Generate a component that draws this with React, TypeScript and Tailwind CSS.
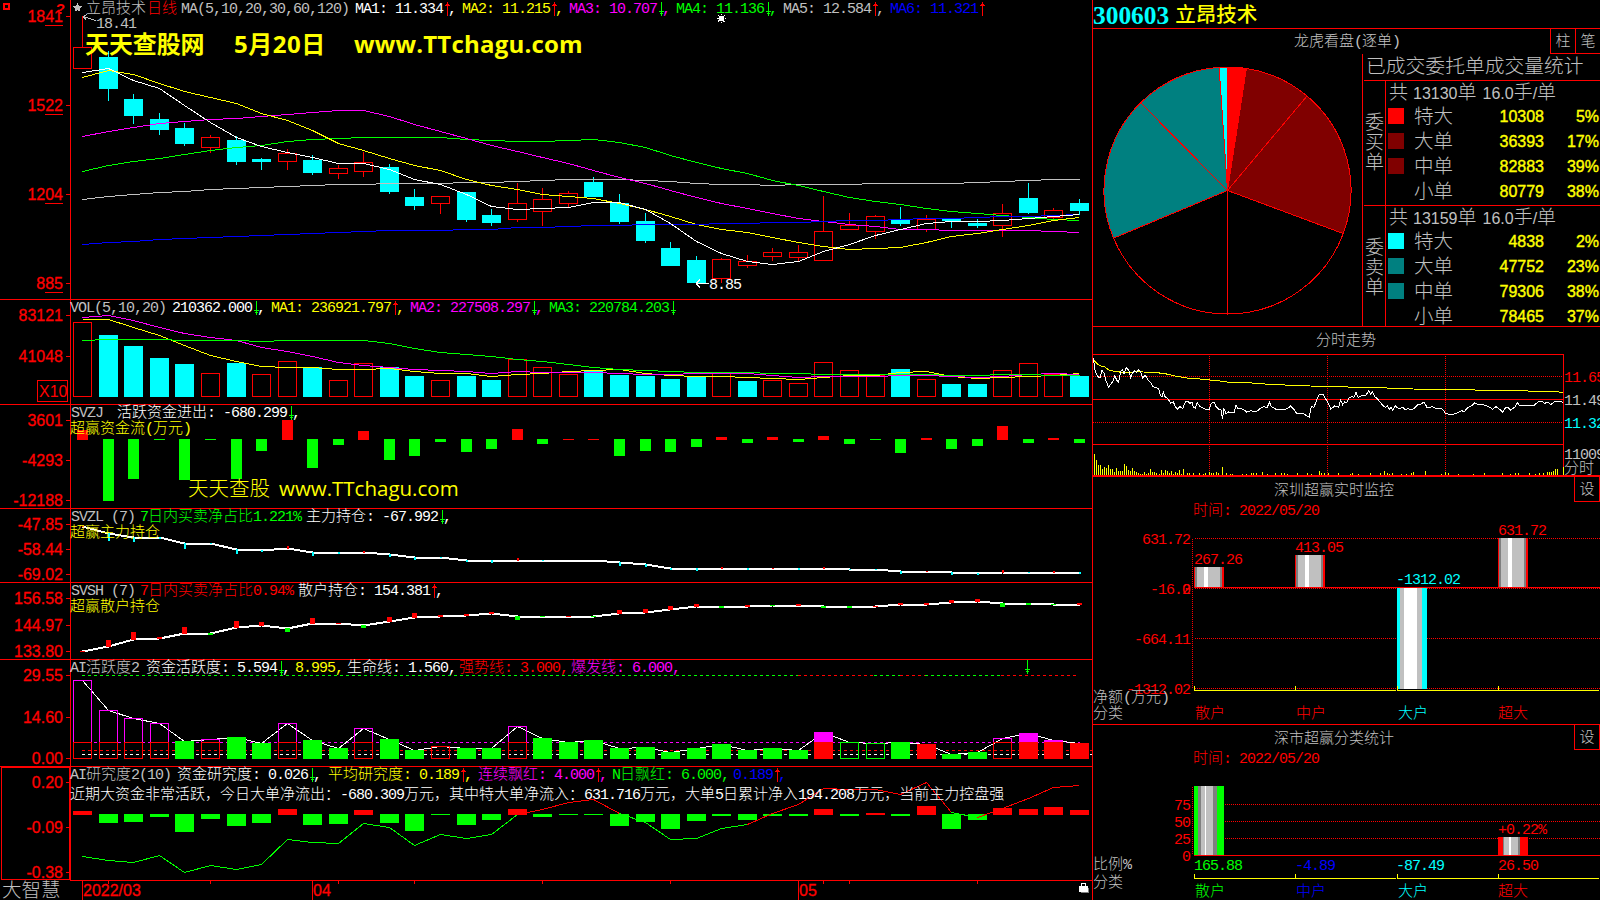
import type { ReactNode } from "react";

const RED = "#ff0000";
const CYAN = "#00ffff";
const GREEN = "#00ff00";
const YELLOW = "#ffff00";
const MAGENTA = "#ff00ff";
const BLUE = "#0000ff";
const WHITE = "#ffffff";
const SILVER = "#c0c0c0";
const GRAY = "#808080";

const MONO = '"Liberation Mono", "Noto Sans CJK SC", monospace';
const SANS = '"Liberation Sans", "Noto Sans CJK SC", sans-serif';

const CJK = /([\u2e80-\u9fff\uff00-\uffef]+)/;

// center of the n-th trading day column
const cx = (i: number) => Math.floor(82.7 + 25.56 * i) + 0.5;

// [up, body top, body bottom, high, low]
const candles: number[][] = [
  [1, 47, 68, 16, 68], [0, 57, 89, 51, 101], [0, 99, 116, 94, 124], [0, 119, 130, 113, 135],
  [0, 128, 144, 123, 146], [1, 137, 147, 135, 152], [0, 140, 162, 136, 165], [0, 159, 162, 158, 170],
  [1, 153, 161, 149, 169], [0, 160, 173, 155, 175], [1, 168, 173, 165, 178], [1, 162, 171, 152, 176],
  [0, 167, 192, 164, 194], [0, 197, 206, 189, 210], [1, 196, 203, 196, 213], [0, 192, 220, 192, 222],
  [0, 215, 223, 209, 226], [1, 203, 219, 183, 221], [1, 199, 211, 188, 225], [1, 193, 203, 191, 207],
  [0, 182, 197, 177, 197], [0, 203, 222, 194, 224], [0, 221, 241, 213, 243], [0, 248, 266, 242, 266],
  [0, 260, 283, 256, 283], [1, 259, 278, 258, 282], [1, 261, 265, 255, 267], [1, 252, 256, 248, 260],
  [1, 252, 257, 245, 261], [1, 231, 260, 196, 260], [1, 225, 229, 213, 229], [1, 216, 231, 215, 238],
  [0, 219, 224, 207, 226], [1, 219, 229, 215, 231], [0, 219, 221, 219, 228], [0, 223, 226, 219, 228],
  [1, 213, 225, 204, 236], [0, 198, 213, 183, 214], [1, 210, 217, 208, 219], [0, 203, 211, 199, 215],
];

const maLines: { color: string; ys: number[] }[] = [
  { color: SILVER, ys: [199, 196, 194, 192, 191, 189, 188, 187, 186, 185, 184, 184, 183, 183, 183, 182, 182, 181, 180, 179, 179, 179, 180, 181, 183, 184, 184, 185, 184, 184, 184, 183, 183, 183, 183, 182, 181, 180, 179, 179] },
  { color: GREEN, ys: [171, 165, 161, 158, 154, 150, 147, 145, 141, 139, 138, 137, 137, 137, 137, 139, 140, 141, 141, 140, 139, 142, 147, 155, 162, 168, 173, 180, 185, 191, 197, 201, 204, 208, 211, 213, 215, 217, 219, 220] },
  { color: MAGENTA, ys: [136, 131, 127, 123, 121, 119, 118, 116, 114, 112, 110, 110, 116, 124, 131, 138, 145, 151, 157, 163, 170, 177, 183, 190, 197, 203, 208, 213, 218, 221, 224, 226, 229, 229, 230, 230, 230, 230, 231, 232] },
  { color: YELLOW, ys: [77, 70, 74, 83, 91, 97, 103, 113, 120, 130, 143, 150, 158, 165, 170, 179, 185, 189, 194, 196, 198, 203, 209, 216, 224, 229, 232, 237, 242, 246, 249, 248, 247, 242, 236, 233, 229, 225, 220, 217] },
  { color: BLUE, ys: [244, 242, 241, 239, 238, 237, 236, 235, 234, 233, 232, 231, 230, 230, 230, 229, 229, 227, 227, 226, 225, 225, 224, 224, 224, 223, 223, 222, 222, 221, 220, 220, 219, 218, 218, 217, 216, 216, 215, 214] },
  { color: WHITE, ys: [72, 68, 80, 88, 105, 122, 137, 146, 152, 157, 163, 163, 169, 179, 184, 194, 206, 209, 208, 207, 202, 202, 209, 223, 241, 253, 261, 264, 261, 251, 244, 235, 229, 223, 221, 221, 220, 218, 216, 214] },
];

const volumeTops = [322, 335, 346, 358, 364, 373, 363, 374, 361, 367, 380, 363, 367, 376, 380, 376, 380, 359, 367, 374, 371, 375, 376, 379, 377, 373, 381, 380, 383, 362, 370, 375, 369, 379, 384, 384, 370, 363, 374, 376];
const volumeHollow = [0, 5, 7, 8, 10, 11, 14, 17, 18, 19, 25, 27, 28, 29, 30, 31, 33, 36, 37, 38];

const volLines: { color: string; ys: number[] }[] = [
  { color: YELLOW, ys: [319, 319, 327, 335, 345, 355, 361, 366, 367, 367, 369, 369, 368, 371, 373, 373, 376, 374, 373, 371, 370, 369, 373, 375, 376, 376, 377, 378, 379, 377, 375, 375, 372, 371, 376, 378, 377, 376, 375, 373] },
  { color: MAGENTA, ys: [317, 315, 320, 327, 333, 337, 340, 347, 351, 356, 362, 365, 367, 369, 370, 371, 373, 371, 372, 372, 372, 373, 374, 374, 373, 373, 373, 375, 377, 376, 376, 376, 375, 375, 376, 377, 376, 374, 373, 374] },
  { color: GREEN, ys: [340, 339, 339, 339, 340, 340, 340, 341, 340, 340, 340, 340, 343, 348, 352, 354, 356, 359, 361, 364, 367, 369, 370, 371, 372, 372, 372, 373, 373, 374, 374, 374, 374, 374, 375, 375, 374, 374, 375, 375] },
];

const fundFlow = [10, -62, -40, -1, -41, -1, -40, -12, 20, -29, -6, 9, -21, -17, -3, -13, -10, 11, -5, 1, 1, -17, -12, -13, -8, 3, -4, 3, -3, 4, -5, -1, -14, 2, -10, -7, 14, -4, 2, -4];

const mainHold = [526, 533, 537, 537, 543, 543, 549, 550, 548, 552, 552, 552, 554, 557, 557, 560, 560, 560, 560, 560, 560, 562, 564, 568, 568, 568, 568, 568, 568, 568, 569, 569, 571, 571, 572, 573, 572, 572, 572, 572];
const mainMarks = [1, -8, -5, -2, -6, -1, -5, -2, 3, -4, -2, 2, -3, -3, -1, -2, -3, 3, -1, 0, 0, -4, -3, -2, -3, 2, -2, 1, -2, 2, -1, -1, -3, 1, -3, -2, 3, -1, 2, -2];

const retailHold = [651, 646, 639, 638, 633, 633, 627, 625, 628, 623, 623, 625, 621, 617, 616, 615, 613, 616, 616, 616, 616, 613, 612, 609, 606, 606, 606, 605, 605, 606, 606, 606, 604, 604, 602, 601, 603, 603, 604, 604];
const retailMarks = [1, 7, 8, 2, 7, -2, 7, 4, -4, 6, 1, -3, 5, 5, 2, 2, 2, -4, -1, 1, -1, 4, 4, 4, 3, -2, 2, -1, 2, -2, -2, 1, 2, 2, 3, 3, -4, -2, -1, 2];

const activeTops = [680, 710, 718, 723, 741, 739, 737, 743, 723, 740, 748, 728, 739, 750, 746, 748, 748, 726, 738, 742, 740, 748, 747, 752, 748, 744, 750, 748, 750, 732, 742, 743, 742, 744, 754, 752, 738, 733, 740, 743];
// g = solid green, o = hollow red with magenta top, h = hollow green, r = hollow red, s = solid red, m = solid red with magenta top
const activeKinds = "oooogoggoggoggrggoggggggggggg" + "mhhgsggomms";

const research = [4, -9, -8, -3, -18, -5, -12, -9, 6, -11, -10, 5, -9, -17, -1, -11, -6, 6, -3, -1, -1, -12, -8, -15, -7, -2, -6, -2, -2, 6, -2, 2, -2, 9, -15, -6, 7, 6, 8, 5];
const researchLine = [856, 860, 862, 855, 872, 865, 869, 864, 839, 842, 843, 823, 827, 845, 834, 838, 834, 814, 809, 802, 799, 813, 822, 839, 838, 828, 824, 813, 804, 788, 789, 789, 794, 782, 812, 817, 808, 798, 787, 785];
const researchParts: [number, number, string][] = [
  [0, 17, GREEN], [17, 21, RED], [21, 26, GREEN], [26, 34, RED], [34, 35, GREEN], [35, 39, RED],
];

const minutePrice =
  "40,115 44,145 48,160 54,170 60,174 66,150 72,160 78,182 86,202 94,190 98,185 104,167 110,180 116,186 122,155 128,148 132,163 138,143 146,150 152,174 158,158 164,152 170,158 176,148 182,156 188,174 196,166 204,180 212,188 218,199 226,203 236,205 240,222 246,232 250,216 256,232 264,236 272,250 280,246 286,260 292,268 300,260 308,266 316,246 324,245 330,250 336,246 340,262 346,264 352,248 360,260 370,264 380,270 388,268 394,250 402,246 408,260 416,268 424,270 427,298 432,266 438,282 446,276 462,278 468,256 474,265 490,268 500,276 512,272 528,276 540,266 550,260 562,262 568,246 574,260 588,268 606,270 622,266 632,258 642,268 650,280 668,280 678,286 688,291 694,260 702,262 710,240 718,222 730,224 740,242 748,256 752,268 764,258 776,262 782,240 788,254 794,246 800,248 806,235 814,230 822,232 828,216 834,232 846,226 858,226 866,212 872,222 878,216 884,230 892,236 900,246 908,256 916,262 922,258 928,268 934,262 938,270 946,258 956,266 968,262 976,270 984,266 996,270 1004,264 1014,254 1024,252 1032,246 1042,264 1056,260 1068,266 1080,264 1090,270 1096,280 1112,284 1130,280 1146,272 1152,276 1164,262 1176,256 1184,248 1196,254 1210,254 1226,260 1238,268 1248,260 1262,270 1268,276 1276,264 1284,262 1292,270 1304,262 1312,248 1320,258 1340,256 1360,258 1374,246 1386,244 1394,250 1404,246 1412,254 1422,246 1436,244 1450,247";
const minuteAvg =
  "40,118 50,130 60,137 75,141 88,151 105,154 125,157 150,157 170,155 190,156 230,158 255,161 290,169 320,174 360,177 390,180 430,184 440,186 515,189 555,192 615,195 690,198 765,200 920,204 1000,207 1120,209 1305,212 1425,215 1450,217";
const minuteVol: [number, number][] = [
  [43, 402], [49, 420], [55, 435], [61, 435], [67, 447], [73, 441], [79, 444], [85, 435], [91, 447], [97, 447], [103, 456], [109, 444], [115, 453], [121, 453], [127, 453], [133, 432], [139, 438], [145, 450], [151, 453], [157, 444], [163, 453], [169, 456], [175, 459], [181, 462], [187, 462], [193, 456], [199, 462], [205, 459], [211, 447], [217, 456], [223, 456], [229, 459], [237, 462], [244, 450], [250, 459], [256, 450], [262, 453], [268, 459], [274, 453], [280, 462], [286, 456], [292, 459], [298, 450], [304, 462], [310, 447], [322, 459], [328, 460], [340, 459], [358, 460], [370, 462], [376, 459], [388, 456], [394, 460], [400, 460], [408, 456], [414, 460], [427, 441], [438, 460], [450, 461], [457, 461], [487, 461], [500, 461], [515, 459], [521, 459], [530, 459], [546, 456], [562, 461], [585, 459], [603, 459], [612, 460], [621, 461], [652, 459], [682, 459], [694, 461], [718, 453], [724, 459], [732, 459], [745, 459], [775, 460], [812, 461], [818, 459], [836, 461], [870, 459], [900, 459], [912, 453], [921, 459], [927, 461], [936, 459], [965, 461], [980, 461], [994, 459], [1000, 456], [1036, 453], [1084, 461], [1096, 456], [1104, 460], [1135, 461], [1180, 461], [1212, 459], [1268, 459], [1290, 461], [1306, 459], [1315, 459], [1348, 459], [1366, 461], [1378, 459], [1390, 459], [1402, 456], [1408, 456], [1414, 456], [1420, 453], [1426, 447], [1432, 447], [1450, 441],
];

type Item = { x: number; text: string; color: string; dir?: "up" | "down"; comma?: boolean };

const points = (ys: number[], from = 0, to = ys.length - 1) =>
  ys.slice(from, to + 1).map((y, i) => `${cx(i + from)},${y + 0.5}`).join(" ");

// Splits mixed strings so that Latin text gets an 8px pitch and CJK a 15px pitch
function Mixed({ text }: { text: string }) {
  return (
    <>
      {text.split(CJK).filter(Boolean).map((run, i) =>
        CJK.test(run) ? <span key={i}>{run}</span> : <span key={i} className="tracking-[-1px]">{run}</span>
      )}
    </>
  );
}

// Same as Mixed, for svg; y is the vertical middle of the glyphs
function Label({ x, y, color, children, anchor = "start" }: { x: number; y: number; color: string; children: string; anchor?: "start" | "end" | "middle" }) {
  return (
    <text x={x} y={y + 5} fill={color} fontFamily={MONO} fontSize={15} textAnchor={anchor} className="whitespace-pre">
      {children.split(CJK).filter(Boolean).map((run, i) => (
        <tspan key={i} letterSpacing={CJK.test(run) ? 0 : -1}>{run}</tspan>
      ))}
    </text>
  );
}

function Arrow({ dir }: { dir: "up" | "down" }) {
  return (
    <svg width="8" height="16" viewBox="0 0 8 16" className="mb-[3px] shrink-0" shapeRendering="crispEdges">
      {dir === "up" ? (
        <path d="M4.5 1v14M2 4.5h5M3 3.5h3" stroke={RED} fill="none" />
      ) : (
        <path d="M4.5 1v14M2 10.5h5M3 12.5h3" stroke={GREEN} fill="none" />
      )}
    </svg>
  );
}

function Legend({ items }: { items: Item[] }) {
  return (
    <div className="absolute top-px left-0 flex h-[18px] items-center whitespace-pre text-[15px] leading-[18px]" style={{ paddingLeft: items[0].x }}>
      {items.map((it, i) => (
        <div
          key={i}
          className="flex shrink-0 items-center"
          style={{ color: it.color, width: i < items.length - 1 ? items[i + 1].x - it.x : undefined }}
        >
          <span><Mixed text={it.text} /></span>
          {it.dir && <Arrow dir={it.dir} />}
          {it.comma && <span className="-ml-[3px]">,</span>}
        </div>
      ))}
    </div>
  );
}

function AxisLabels({ rows, underline }: { rows: [number, string][]; underline?: boolean }) {
  return (
    <g>
      {rows.map(([y, text]) => (
        <g key={text}>
          <text x={63} y={y + 6} textAnchor="end" fill={RED} stroke={RED} strokeWidth={0.3} fontFamily={SANS} fontSize={16}>
            {text}
          </text>
          <path d={`M66 ${y + 0.5}h4`} stroke={RED} shapeRendering="crispEdges" />
          {underline && <path d={`M45 ${y + 9.5}h18`} stroke={RED} shapeRendering="crispEdges" />}
        </g>
      ))}
    </g>
  );
}

function Panel({ top, height, rows, legend, sub, underline, children }: {
  top: number;
  height: number;
  rows: [number, string][];
  legend: Item[];
  sub?: string;
  underline?: boolean;
  children: ReactNode;
}) {
  return (
    <section className="relative shrink-0" style={{ height }}>
      <svg width="1092" height={height} viewBox={`0 ${top} 1092 ${height}`} className="block">
        <AxisLabels rows={rows} underline={underline} />
        <g shapeRendering="crispEdges" fill="none">
          <path d={`M70.5 ${top}v${height}`} stroke={RED} />
          {top > 0 && <path d={`M0 ${top + 0.5}h1092`} stroke={RED} />}
          {children}
        </g>
      </svg>
      <Legend items={legend} />
      {sub && (
        <div className="absolute top-[17px] left-[70px] whitespace-pre text-[15px] leading-[18px] text-[#ffff00]">
          <Mixed text={sub} />
        </div>
      )}
    </section>
  );
}

function PricePanel() {
  return (
    <Panel
      top={0}
      height={299}
      underline
      rows={[[16, "1841"], [105, "1522"], [194, "1204"], [283, "885"]]}
      legend={[
        { x: 86, text: "立昂技术", color: SILVER },
        { x: 147, text: "日线", color: RED },
        { x: 181, text: "MA(5,10,20,30,60,120)", color: SILVER },
        { x: 355, text: "MA1: 11.334", color: WHITE, dir: "up", comma: true },
        { x: 462, text: "MA2: 11.215", color: YELLOW, dir: "up", comma: true },
        { x: 569, text: "MA3: 10.707", color: MAGENTA, dir: "down", comma: true },
        { x: 676, text: "MA4: 11.136", color: GREEN, dir: "down", comma: true },
        { x: 783, text: "MA5: 12.584", color: SILVER, dir: "up", comma: true },
        { x: 890, text: "MA6: 11.321", color: BLUE, dir: "up" },
      ]}
    >
      <path d="M3.5 3.5h5v5h-5zM7 9h3" stroke={RED} strokeWidth={2} />
      <path d="M77.5 3l1.4 3.4h3.6l-2.9 2.2 1.1 3.7-3.2-2.2-3.2 2.2 1.1-3.7-2.9-2.2h3.6z" fill={SILVER} />
      <text x={56} y={14} fill={RED} fontFamily={SANS} fontSize={15} fontWeight={700}>?</text>
      {candles.map(([up, t, b, hi, lo], i) =>
        up ? (
          <g key={i} stroke={RED}>
            <rect x={cx(i) - 9} y={t + 0.5} width={18} height={b - t} />
            <path d={`M${cx(i)} ${hi}V${t}M${cx(i)} ${b}V${lo + 1}`} />
          </g>
        ) : (
          <g key={i}>
            <rect x={cx(i) - 9.5} y={t} width={19} height={b - t} fill={CYAN} />
            <path d={`M${cx(i)} ${hi}V${lo}`} stroke={CYAN} />
          </g>
        )
      )}
      {maLines.map((l) => (
        <polyline key={l.color} points={points(l.ys)} stroke={l.color} />
      ))}
      <path d="M83 16.5l4-2M83 16.5l3 3M83 16.5l13 4" stroke={SILVER} />
      <Label x={96} y={23} color={SILVER}>18.41</Label>
      <path d="M696 283.5h13M696 283.5l4-4M696 283.5l4 4" stroke={WHITE} />
      <Label x={709} y={284} color={WHITE}>8.85</Label>
      <circle cx={721.5} cy={18.5} r={3} fill={WHITE} />
      <circle cx={721.5} cy={18.5} r={4} stroke={WHITE} strokeDasharray="1 2" />
    </Panel>
  );
}

function VolumePanel() {
  return (
    <Panel
      top={299}
      height={105}
      rows={[[315, "83121"], [356, "41048"]]}
      legend={[
        { x: 70, text: "VOL(5,10,20)", color: SILVER },
        { x: 172, text: "210362.000", color: WHITE, dir: "down", comma: true },
        { x: 271, text: "MA1: 236921.797", color: YELLOW, dir: "up", comma: true },
        { x: 410, text: "MA2: 227508.297", color: MAGENTA, dir: "down", comma: true },
        { x: 549, text: "MA3: 220784.203", color: GREEN, dir: "down" },
      ]}
    >
      <rect x={37.5} y={380.5} width={30} height={21} stroke={RED} />
      <text x={39} y={397} fill={RED} fontFamily={SANS} fontSize={16}>X10</text>
      {volumeTops.map((t, i) =>
        volumeHollow.includes(i) ? (
          <rect key={i} x={cx(i) - 9} y={t + 0.5} width={18} height={396 - t} stroke={RED} />
        ) : (
          <rect key={i} x={cx(i) - 9.5} y={t} width={19} height={397 - t} fill={CYAN} />
        )
      )}
      {volLines.map((l) => (
        <polyline key={l.color} points={points(l.ys)} stroke={l.color} />
      ))}
    </Panel>
  );
}

function FlowPanel() {
  return (
    <Panel
      top={404}
      height={104}
      sub="超赢资金流(万元)"
      rows={[[420, "3601"], [460, "-4293"], [500, "-12188"]]}
      legend={[
        { x: 71, text: "SVZJ", color: SILVER },
        { x: 117, text: "活跃资金进出: -680.299", color: WHITE, dir: "down", comma: true },
      ]}
    >
      {fundFlow.map((v, i) => (
        <rect
          key={i}
          x={cx(i) - 5.5}
          y={v > 0 ? 440 - v : 439}
          width={11}
          height={Math.abs(v)}
          fill={v > 0 ? RED : GREEN}
        />
      ))}
    </Panel>
  );
}

function HoldPanel({ ys, marks, markWidth, down, ...rest }: {
  ys: number[];
  marks: number[];
  markWidth: number;
  down: string;
  top: number;
  height: number;
  sub: string;
  rows: [number, string][];
  legend: Item[];
}) {
  return (
    <Panel {...rest}>
      <polyline points={points(ys)} stroke={WHITE} strokeWidth={2} />
      {marks.map((m, i) => (
        <rect
          key={i}
          x={cx(i) - markWidth / 2}
          y={m > 0 ? ys[i] - m + 1 : ys[i]}
          width={markWidth}
          height={Math.abs(m)}
          fill={m > 0 ? RED : down}
        />
      ))}
    </Panel>
  );
}

function ActivePanel() {
  const base = 758.5;
  return (
    <Panel
      top={659}
      height={107}
      rows={[[675, "29.55"], [717, "14.60"], [758, "0.00"]]}
      legend={[
        { x: 70, text: "AI活跃度2", color: SILVER },
        { x: 146, text: "资金活跃度: 5.594", color: WHITE, dir: "down", comma: true },
        { x: 295, text: "8.995,", color: YELLOW },
        { x: 347, text: "生命线: 1.560,", color: WHITE },
        { x: 459, text: "强势线: 3.000,", color: RED },
        { x: 571, text: "爆发线: 6.000,", color: MAGENTA },
      ]}
    >
      <g strokeDasharray="3 3">
        <path d="M82 675.5h716M874 675.5h26M925 675.5h76" stroke={GREEN} />
        <path d="M798 675.5h76M900 675.5h25M1001 675.5h77" stroke={RED} />
        <path d="M82 742.5h998" stroke={MAGENTA} />
        <path d="M82 750.5h1010" stroke={RED} />
        <path d="M82 754.5h1010" stroke={WHITE} />
      </g>
      <path d="M1027.5 660v14M1025 669.5h5M1026 671.5h3" stroke={GREEN} />
      <polyline points={points(activeTops)} stroke={WHITE} />
      {activeTops.map((t, i) => {
        const kind = activeKinds[i];
        const x = cx(i);
        if (kind === "g" || kind === "s")
          return <rect key={i} x={x - 9.5} y={t} width={19} height={759 - t} fill={kind === "g" ? GREEN : RED} />;
        if (kind === "h" || kind === "r")
          return <rect key={i} x={x - 9} y={t + 0.5} width={18} height={base - t - 0.5} stroke={kind === "h" ? GREEN : RED} />;
        if (kind === "m")
          return (
            <g key={i}>
              <rect x={x - 9.5} y={t} width={19} height={742 - t} fill={MAGENTA} />
              <rect x={x - 9.5} y={742} width={19} height={17} fill={RED} />
            </g>
          );
        return (
          <g key={i}>
            <path d={`M${x - 9} 742V${t + 0.5}h18V742`} stroke={MAGENTA} />
            <rect x={x - 9} y={742.5} width={18} height={16} stroke={RED} />
          </g>
        );
      })}
    </Panel>
  );
}

function ResearchPanel() {
  return (
    <div className="relative">
      <Panel
        top={766}
        height={114}
        rows={[[782, "0.20"], [827, "-0.09"], [872, "-0.38"]]}
        legend={[
          { x: 70, text: "AI研究度2(10)", color: SILVER },
          { x: 177, text: "资金研究度: 0.026", color: WHITE, dir: "down", comma: true },
          { x: 328, text: "平均研究度: 0.189", color: YELLOW, dir: "up", comma: true },
          { x: 478, text: "连续飘红: 4.000", color: MAGENTA, dir: "up", comma: true },
          { x: 612, text: "N日飘红: 6.000,", color: GREEN },
          { x: 733, text: "0.189", color: BLUE, dir: "up", comma: true },
        ]}
      >
        <rect x={1.5} y={767.5} width={68} height={112} stroke={RED} />
        {research.map((v, i) => (
          <rect key={i} x={cx(i) - 9.5} y={v > 0 ? 815 - v : 814} width={19} height={Math.abs(v)} fill={v > 0 ? RED : GREEN} />
        ))}
        {researchParts.map(([a, b, color]) => (
          <polyline key={a} points={points(researchLine, a, b)} stroke={color} />
        ))}
      </Panel>
      <p className="absolute top-[21px] left-[70px] whitespace-pre text-[15px] leading-[18px] text-white">
        <Mixed text="近期大资金非常活跃，今日大单净流出：-680.309万元，其中特大单净流入：631.716万元，大单5日累计净入194.208万元，当前主力控盘强" />
      </p>
    </div>
  );
}

function TimeAxis() {
  return (
    <svg width="1092" height="20" viewBox="0 880 1092 20" className="block shrink-0">
      <path
        d="M70 880.5h1022M82.5 880v20M312.5 880v20M798.5 880v20M108.5 880v4M210.5 880v4M338.5 880v4M414.5 880v4M542.5 880v4M670.5 880v4M823.5 880v4M849.5 880v4M977.5 880v4"
        stroke={RED}
        shapeRendering="crispEdges"
      />
      <text x={2} y={897} fill={SILVER} fontFamily={SANS} fontSize={19.5}>大智慧</text>
      <g fill={RED} stroke={RED} strokeWidth={0.3} fontFamily={SANS} fontSize={16}>
        <text x={83} y={896}>2022/03</text>
        <text x={313} y={896}>04</text>
        <text x={799} y={896}>05</text>
      </g>
      <g shapeRendering="crispEdges">
        <rect x={1081} y={888} width={8} height={5} fill={GRAY} />
        <rect x={1079} y={886} width={9} height={6} fill={WHITE} />
        <path d="M1081.5 886v-2.5h4v2.5" fill="none" stroke={WHITE} />
      </g>
    </svg>
  );
}

const buyRows = [
  { name: "特大", value: "10308", pct: "5%", swatch: "bg-[#ff0000]" },
  { name: "大单", value: "36393", pct: "17%", swatch: "bg-[#800000]" },
  { name: "中单", value: "82883", pct: "39%", swatch: "bg-[#800000]" },
  { name: "小单", value: "80779", pct: "38%", swatch: "bg-black" },
];
const sellRows = [
  { name: "特大", value: "4838", pct: "2%", swatch: "bg-[#00ffff]" },
  { name: "大单", value: "47752", pct: "23%", swatch: "bg-[#008080]" },
  { name: "中单", value: "79306", pct: "38%", swatch: "bg-[#008080]" },
  { name: "小单", value: "78465", pct: "37%", swatch: "bg-black" },
];

function OrderBlock({ side, total, rows }: { side: string; total: string; rows: typeof buyRows }) {
  return (
    <div className="flex h-[125px] border-t border-[#ff0000]">
      <div className="flex w-[22px] flex-col items-center justify-center border-r border-[#ff0000] text-[19px] leading-[20px]">
        {side.split("").map((c) => (
          <span key={c}>{c}</span>
        ))}
      </div>
      <div className="flex-1">
        <div className="flex h-[23px] items-center pt-[2px] pl-[3px] text-[19px]">
          <span className="w-[24px]">共</span>
          <span className="text-[16px]">{total}</span>
          <span className="w-[25px]">单</span>
          <span className="text-[16px]">16.0</span>手<span className="text-[16px]">/</span>单
        </div>
        {rows.map((r) => (
          <div key={r.name} className="flex h-[25px] items-center pl-[2px]">
            <span className={`mb-px h-4 w-4 ${r.swatch}`} />
            <span className="ml-[10px] w-[48px] text-[19.5px]">{r.name}</span>
            <span className="w-[82px] text-right text-[16px] text-[#ffff00] [-webkit-text-stroke:0.4px]">{r.value}</span>
            <span className="flex-1 pr-px text-right text-[16px] text-[#ffff00] [-webkit-text-stroke:0.4px]">{r.pct}</span>
          </div>
        ))}
      </div>
    </div>
  );
}

// clockwise angles from twelve o'clock
const slices: [number, number, string][] = [
  [0, 8.8, "#ff0000"], [8.8, 40.1, "#800000"], [40.1, 110.4, "#800000"], [110.4, 180, "#000"],
  [180, 247.3, "#000"], [247.3, 315.3, "#008080"], [315.3, 356.1, "#008080"], [356.1, 360, "#00ffff"],
];

function Pie() {
  const at = (deg: number) => {
    const a = (deg * Math.PI) / 180;
    return `${134.5 + 123.5 * Math.sin(a)} ${136.5 - 123.5 * Math.cos(a)}`;
  };
  return (
    <svg width="269" height="272" className="block" shapeRendering="crispEdges">
      {slices.map(([a, b, fill]) => (
        <path key={a} d={`M134.5 136.5L${at(a)}A123.5 123.5 0 0 1 ${at(b)}Z`} fill={fill} stroke={RED} />
      ))}
    </svg>
  );
}

function DragonPanel() {
  return (
    <section className="h-[298px] shrink-0 overflow-hidden border-t border-[#ff0000]">
      <div className="flex h-[25px] justify-between">
        <h2 className="pt-[4px] pl-[201px] text-[15px] leading-[19px]" style={{ fontFamily: MONO }}>
          <Mixed text="龙虎看盘(逐单)" />
        </h2>
        <div className="flex text-[15px] leading-[22px]">
          <button className="w-[25px] border-b border-l border-[#ff0000]">柱</button>
          <button className="w-[25px] border-b border-l border-[#ff0000]">笔</button>
        </div>
      </div>
      <div className="flex h-[272px]">
        <Pie />
        <div className="flex-1 border-l border-[#ff0000]">
          <div className="h-[26px] pl-[3px] text-[19.8px] leading-[25px] whitespace-nowrap">已成交委托单成交量统计</div>
          <div className="pl-px">
            <OrderBlock side="委买单" total="13130" rows={buyRows} />
            <OrderBlock side="委卖单" total="13159" rows={sellRows} />
          </div>
        </div>
      </div>
    </section>
  );
}

function MinutePanel() {
  return (
    <section className="h-[150px] shrink-0 border-t border-[#ff0000]">
      <h2 className="h-[27px] pl-[223px] text-[15px] leading-[25px]">分时走势</h2>
      {/* three units per pixel */}
      <svg width="507" height="122" viewBox="39 102 1521 366" className="block">
        <g shapeRendering="crispEdges" fill="none" strokeWidth={3}>
          <path d="M39 103.5H1450.5V465M39 238.5H1450M39 373.5H1450" stroke={RED} />
          <path d="M39 169.5H1450M39 307.5H1450M388.5 108V465M742.5 108V465M1096.5 108V465" stroke={RED} strokeDasharray="3 3" />
          <path d="M39 466.5H1560" stroke={RED} />
          <path d={minuteVol.map(([x, y]) => `M${x + 0.5} ${y}V465`).join("")} stroke={YELLOW} />
          <polyline points={minuteAvg} stroke={YELLOW} />
          <polyline points={minutePrice} stroke={WHITE} />
        </g>
        <g transform="scale(3)">
          <Label x={484} y={57} color={RED}>11.65</Label>
          <Label x={484} y={80} color={SILVER}>11.49</Label>
          <Label x={484} y={103} color={CYAN}>11.32</Label>
          <Label x={484} y={134} color={SILVER}>11009</Label>
          <Label x={484} y={148} color={SILVER}>分时</Label>
        </g>
      </svg>
    </section>
  );
}

type Stripe = [number, string];

// A cylinder-like bar made of flat vertical stripes
function Cylinder({ x, y, height, stripes }: { x: number; y: number; height: number; stripes: Stripe[] }) {
  let left = x;
  return (
    <g>
      {stripes.map(([w, fill], i) => {
        const rect = <rect key={i} x={left} y={y} width={w} height={height} fill={fill} />;
        left += w;
        return rect;
      })}
    </g>
  );
}

const redBar: Stripe[] = [[1, RED], [2, GRAY], [7, SILVER], [4, WHITE], [12, SILVER], [2, GRAY], [2, RED]];
const cyanBar: Stripe[] = [[3, CYAN], [4, SILVER], [13, WHITE], [5, SILVER], [5, CYAN]];
const greenBar: Stripe[] = [[4, GREEN], [3, GRAY], [4, SILVER], [1, WHITE], [7, SILVER], [4, GRAY], [7, GREEN]];
const wideRedBar: Stripe[] = [[5, RED], [1, GRAY], [5, SILVER], [2, WHITE], [7, SILVER], [2, GRAY], [8, RED]];

function MonitorPanel({ title, top, height, children }: { title: string; top: number; height: number; children: ReactNode }) {
  return (
    <section className="relative shrink-0" style={{ height }}>
      <svg width="507" height={height} viewBox={`1093 ${top} 507 ${height}`} className="block">
        <path d={`M1093 ${top + 0.5}h507`} stroke={RED} shapeRendering="crispEdges" />
        {children}
      </svg>
      <div className="absolute inset-x-0 top-0 flex justify-between text-[15px]">
        <div className="pt-[4px]">
          <h2 className="pl-[181px] leading-[20px]">{title}</h2>
          <div className="pt-[2px] pl-[100px] leading-[20px] whitespace-pre text-[#ff0000]" style={{ fontFamily: MONO }}>
            <Mixed text="时间: 2022/05/20" />
          </div>
        </div>
        <button className="h-[26px] w-[26px] border border-t-0 border-[#ff0000] leading-[24px]">设</button>
      </div>
    </section>
  );
}

const categories = [
  { x: 1195, name: "散户" },
  { x: 1296, name: "中户" },
  { x: 1398, name: "大户" },
  { x: 1498, name: "超大" },
];

export default function App() {
  return (
    <div className="flex h-[900px] w-[1600px] overflow-hidden bg-black font-light text-[#c0c0c0]" style={{ fontFamily: SANS }}>
      <main className="relative flex w-[1092px] shrink-0 flex-col" style={{ fontFamily: MONO }}>
        <PricePanel />
        <VolumePanel />
        <FlowPanel />
        <HoldPanel
          top={508}
          height={74}
          sub="超赢主力持仓"
          ys={mainHold}
          marks={mainMarks}
          markWidth={2}
          down={CYAN}
          rows={[[524, "-47.85"], [549, "-58.44"], [574, "-69.02"]]}
          legend={[
            { x: 71, text: "SVZL (7)", color: SILVER },
            { x: 140, text: "7日内买卖净占比1.221%", color: GREEN },
            { x: 306, text: "主力持仓: -67.992", color: WHITE, dir: "down", comma: true },
          ]}
        />
        <HoldPanel
          top={582}
          height={77}
          sub="超赢散户持仓"
          ys={retailHold}
          marks={retailMarks}
          markWidth={5}
          down={GREEN}
          rows={[[598, "156.58"], [625, "144.97"], [651, "133.80"]]}
          legend={[
            { x: 71, text: "SVSH (7)", color: SILVER },
            { x: 140, text: "7日内买卖净占比0.94%", color: RED },
            { x: 298, text: "散户持仓: 154.381", color: WHITE, dir: "up", comma: true },
          ]}
        />
        <ActivePanel />
        <ResearchPanel />
        <TimeAxis />

        {/* watermarks */}
        <div className="absolute top-[27px] left-[85px] flex text-[24px] leading-[34px] font-bold tracking-[0.2px] whitespace-nowrap text-[#ffff00]" style={{ fontFamily: '"Open Sans", "Noto Sans CJK SC", sans-serif' }}>
          <span className="w-[149px] tracking-[-0.1px]">天天查股网</span>
          <span className="w-[120px] tracking-[0.5px]">5月20日</span>
          <span>www.TTchagu.com</span>
        </div>
        <div className="absolute top-[473px] left-[188px] flex text-[20.5px] leading-[30px] font-normal whitespace-nowrap text-[#ffff00]" style={{ fontFamily: '"Open Sans", "Noto Sans CJK SC", sans-serif' }}>
          <span className="w-[91px] font-light">天天查股</span>
          <span>www.TTchagu.com</span>
        </div>
      </main>

      <aside className="flex w-[508px] flex-col border-l border-[#ff0000]">
        <header className="flex h-[28px] shrink-0 items-center pt-[3px]">
          <span className="text-[25.4px] font-bold text-[#00ffff]" style={{ fontFamily: '"Liberation Serif", serif' }}>300603</span>
          <span className="ml-[6px] text-[20.5px] font-medium text-[#ffff00]">立昂技术</span>
        </header>
        <DragonPanel />
        <MinutePanel />

        <MonitorPanel title="深圳超赢实时监控" top={476} height={248}>
          <g shapeRendering="crispEdges" fill="none">
            <path d="M1195 538.5h405M1195 588.5h405M1195 638.5h405M1195 688.5h405M1192.5 539v150" stroke={RED} strokeDasharray="1 1" />
            <path d="M1194 587.5h406" stroke={RED} />
            <Cylinder x={1194} y={567} height={20} stripes={redBar} />
            <Cylinder x={1295} y={555} height={32} stripes={redBar} />
            <Cylinder x={1397} y={588} height={101} stripes={cyanBar} />
            <Cylinder x={1498} y={538} height={49} stripes={redBar} />
            <path d="M1194.5 686v4.5H1396M1295.5 686v4M1397.5 686v4.5H1599M1498.5 686v4" stroke={YELLOW} />
          </g>
          <Label x={1190} y={539} color={RED} anchor="end">631.72</Label>
          <Label x={1190} y={589} color={RED} anchor="end">-16.2</Label>
          <Label x={1190} y={589} color={RED} anchor="end">0</Label>
          <Label x={1190} y={639} color={RED} anchor="end">-664.11</Label>
          <Label x={1190} y={689} color={RED} anchor="end">-1312.02</Label>
          <Label x={1194} y={559} color={RED}>267.26</Label>
          <Label x={1295} y={547} color={RED}>413.05</Label>
          <Label x={1396} y={579} color={CYAN}>-1312.02</Label>
          <Label x={1498} y={530} color={RED}>631.72</Label>
          <Label x={1093} y={697} color={SILVER}>净额(万元)</Label>
          <Label x={1093} y={713} color={SILVER}>分类</Label>
          {categories.map((c, i) => (
            <Label key={c.name} x={c.x} y={713} color={i === 2 ? CYAN : RED}>{c.name}</Label>
          ))}
        </MonitorPanel>

        <MonitorPanel title="深市超赢分类统计" top={724} height={176}>
          <g shapeRendering="crispEdges" fill="none">
            <path d="M1195 804.5h405M1195 821.5h405M1195 838.5h405M1192.5 787v68" stroke={RED} strokeDasharray="1 1" />
            <path d="M1194 855.5h406" stroke={RED} />
            <Cylinder x={1194} y={786} height={69} stripes={greenBar} />
            <Cylinder x={1498} y={837} height={18} stripes={wideRedBar} />
            <path d="M1194.5 874v4.5H1396M1295.5 874v4M1397.5 874v4.5H1599M1498.5 874v4" stroke={YELLOW} />
          </g>
          <Label x={1190} y={805} color={RED} anchor="end">75</Label>
          <Label x={1190} y={822} color={RED} anchor="end">50</Label>
          <Label x={1190} y={839} color={RED} anchor="end">25</Label>
          <Label x={1190} y={856} color={RED} anchor="end">0</Label>
          <Label x={1498} y={829} color={RED}>+0.22%</Label>
          <Label x={1194} y={865} color={GREEN}>165.88</Label>
          <Label x={1295} y={865} color={BLUE}>-4.89</Label>
          <Label x={1396} y={865} color={CYAN}>-87.49</Label>
          <Label x={1498} y={865} color={RED}>26.50</Label>
          <Label x={1093} y={864} color={SILVER}>比例%</Label>
          <Label x={1093} y={882} color={SILVER}>分类</Label>
          {categories.map((c, i) => (
            <Label key={c.name} x={c.x} y={891} color={[GREEN, BLUE, CYAN, RED][i]}>{c.name}</Label>
          ))}
        </MonitorPanel>
      </aside>
    </div>
  );
}
